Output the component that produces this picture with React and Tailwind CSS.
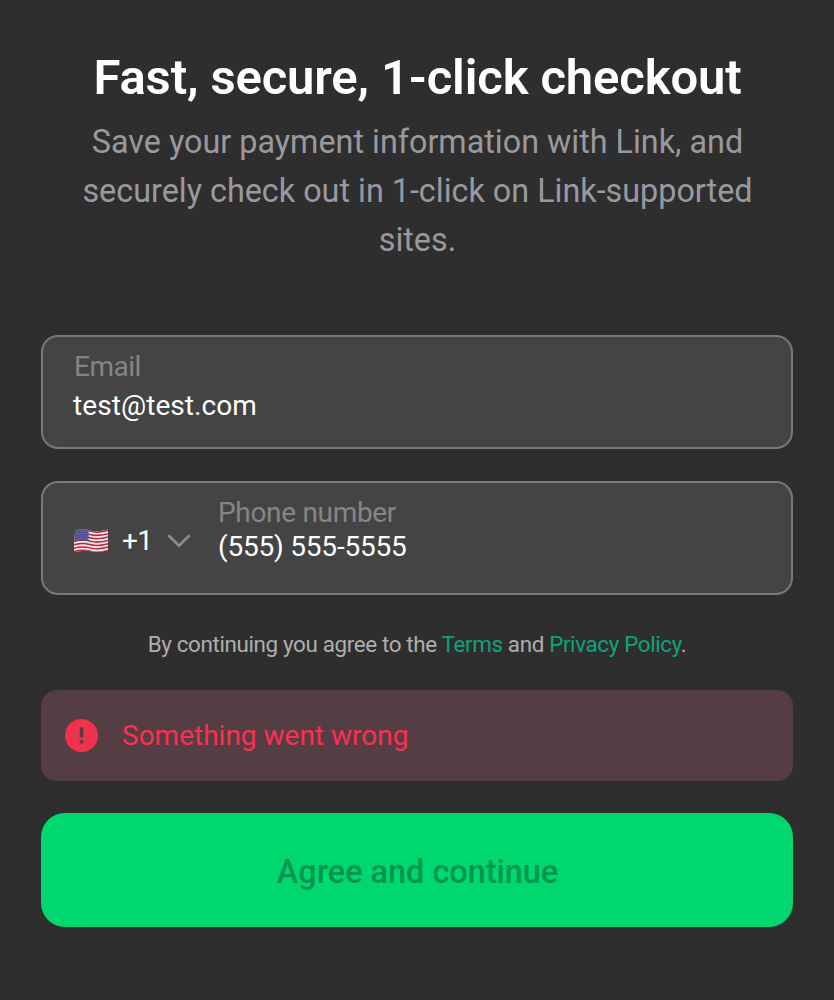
const STRIPES = Array.from({ length: 13 }, (_, i) => i);

function FlagUS() {
  return (
    <svg className="h-[26px] w-[36px] shrink-0" viewBox="0 0 36 26" aria-label="United States">
      <defs>
        <clipPath id="flag">
          <path d="M2.2 2.6Q9 0.2 17 2.4T34.8 1.6Q35.2 12 34.8 22.2Q26 25 18.5 23.3T1 24.2Q1 12 2.2 2.6Z" />
        </clipPath>
      </defs>
      <g clipPath="url(#flag)">
        <rect width="36" height="26" fill="#eee6e6" />
        {STRIPES.map((i) => (
          <path
            key={i}
            d="M0 3Q9 0.2 17 2.4T36 1.4"
            transform={`translate(0 ${0.8 + i * 1.68})`}
            fill="none"
            stroke={i % 2 ? '#eee6e6' : '#b52a40'}
            strokeWidth="1.75"
          />
        ))}
        <path d="M0 2Q8 0 15.5 2V13.2Q8 11 0 13.6Z" fill="#4d4e8c" />
        <path d="M3 4Q9 2 15 4M3 6.5Q9 4.5 15 6.5M3 9Q9 7 15 9M3 11.5Q9 9.5 15 11.5" fill="none" stroke="#9798bf" strokeWidth=".8" strokeDasharray=".9 1.4" />
      </g>
    </svg>
  );
}

export default function App() {
  return (
    <main className="flex h-[1000px] w-[834px] flex-col bg-[#2e2e2e] px-[41px] pt-[48px] font-['Roboto',sans-serif]">
      <h1 className="h-[60px] whitespace-nowrap pl-px text-center text-[49px] leading-[60px] font-semibold tracking-[-0.14px] text-white">Fast, secure, 1-click checkout</h1>
      <p className="mt-[10px] pl-px text-center text-[32.35px] leading-[49px] text-[#99999f]">Save your payment information with Link, and<br />securely check out in 1-click on Link-supported<br />sites.</p>
      <div className="mt-[70px] flex h-[114px] flex-col rounded-[17px] border-2 border-[#77777d] bg-[#444444] px-[31px] pt-[13px]">
        <span className="text-[28px] leading-[34px] tracking-[-0.5px] text-[#858585]">Email</span>
        <span className="-ml-px mt-[5px] text-[28px] leading-[34px] tracking-[0.08px] text-white">test@test.com</span>
      </div>
      <div className="mt-[32px] flex h-[114px] rounded-[17px] border-2 border-[#77777d] bg-[#444444] pl-[30px]">
        <div className="flex h-[114px] w-[145px] items-center pt-[2px] text-[28px] text-white">
          <FlagUS />
          <span className="ml-[13px] tracking-[-0.7px]">+1</span>
          <svg className="ml-[15px] h-[14px] w-[24px]" viewBox="0 0 24 14" fill="none" stroke="#8c8c8c" strokeWidth="2.7">
            <path d="M1.3 1.3 12 11.6 22.7 1.3" />
          </svg>
        </div>
        <div className="flex flex-col pt-[13px] text-[28px] leading-[34px] tracking-[-0.25px]">
          <span className="tracking-[-0.32px] text-[#858585]">Phone number</span>
          <span className="tracking-[-0.2px] text-white">(555) 555-5555</span>
        </div>
      </div>
      <p className="mt-[32px] text-center text-[22.4px] leading-[34px] tracking-[-0.36px] text-[#aeaeae]">By continuing you agree to the <a className="text-[#0ca47b]">Terms</a> and <a className="text-[#0ca47b]">Privacy Policy</a>.</p>
      <div className="mt-[29px] flex h-[91px] items-center gap-[24px] rounded-[16px] bg-[#553e43] pl-[24px] text-[28px] text-[#fb3050]">
        <svg className="h-[33px] w-[33px]" viewBox="0 0 33 33">
          <circle cx="16.5" cy="16.5" r="16.5" fill="#f0324b" />
          <path d="M14.6 9.9a1.9 1.9 0 0 1 3.8 0l-.3 8.4h-3.2Z" fill="#553e43" />
          <circle cx="16.5" cy="22.7" r="2" fill="#553e43" />
        </svg>
        <span>Something went wrong</span>
      </div>
      <button className="mt-[32px] h-[113.5px] rounded-[24px] bg-[#00d76f] pt-[5px] pl-px text-[32.4px] font-medium text-[#009650]">Agree and continue</button>
    </main>
  );
}
